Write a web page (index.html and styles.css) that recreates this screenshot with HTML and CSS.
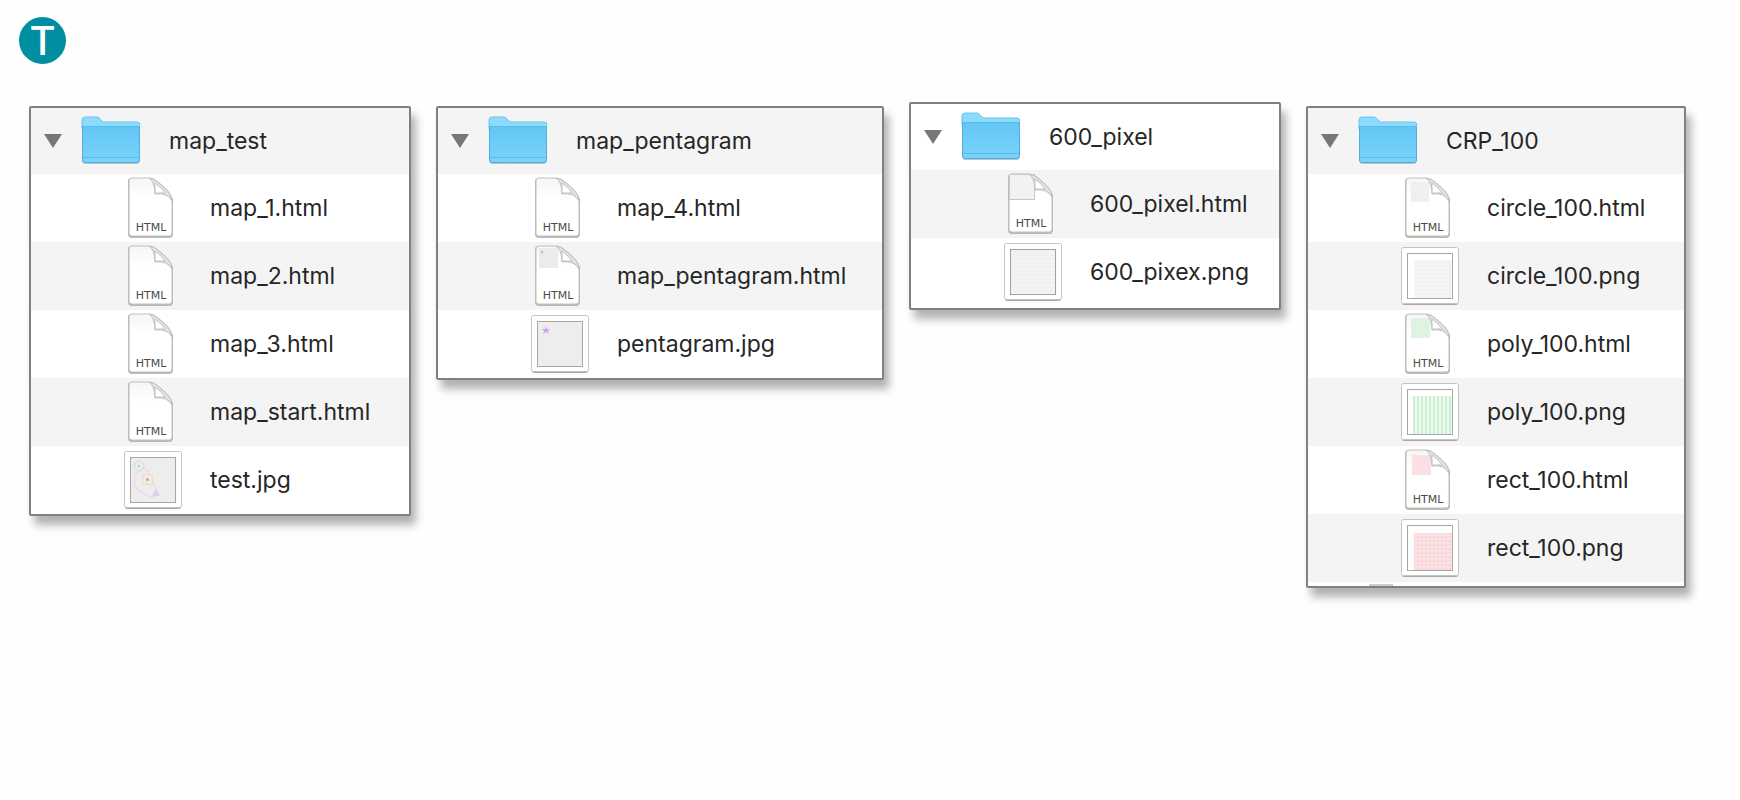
FILE: index.html
```html
<!DOCTYPE html>
<html lang="en">
<head>
    <meta charset="UTF-8">
    <meta name="viewport" content="width=device-width, initial-scale=1.0">
    <title>Map files</title>
    <link rel="stylesheet" href="styles.css">
</head>
<body>
    <!-- shared icons -->
    <svg class="defs" width="0" height="0" aria-hidden="true">
        <defs>
            <linearGradient id="blue" x1="0" y1="0" x2="0" y2="1">
                <stop offset="0" stop-color="#62c6f5"/>
                <stop offset="1" stop-color="#7ad3fb"/>
            </linearGradient>
            <linearGradient id="paper" x1="0" y1="0" x2="0" y2="1">
                <stop offset="0" stop-color="#f6f6f6"/>
                <stop offset="0.35" stop-color="#ffffff"/>
            </linearGradient>
            <pattern id="grid-gray" width="4" height="4" patternUnits="userSpaceOnUse">
                <rect width="4" height="4" fill="#f6f6f6"/>
                <path d="M0 0H4M0 0V4" stroke="#ececec"/>
            </pattern>
            <pattern id="lines-gray" width="4" height="4" patternUnits="userSpaceOnUse">
                <rect width="4" height="4" fill="#f3f3f3"/>
                <path d="M0 1H4" stroke="#eeeeee"/>
            </pattern>
            <pattern id="grid-green" width="4" height="4" patternUnits="userSpaceOnUse">
                <rect width="4" height="4" fill="#f0fbf1"/>
                <path d="M1 0V4" stroke="#c8ecce" stroke-width="2"/>
                <path d="M0 3H4" stroke="#e0f5e3"/>
            </pattern>
            <pattern id="grid-red" width="4" height="4" patternUnits="userSpaceOnUse">
                <rect width="4" height="4" fill="#fbdfe2"/>
                <path d="M0 3H4" stroke="#f6ccd1"/>
                <path d="M3 0V4" stroke="#fae9eb"/>
            </pattern>
            <symbol id="folder" viewBox="0 0 60 50">
                <rect x="2" y="44" width="56" height="4" rx="2" fill="#b9c3c9"/>
                <path d="M1 10V4Q1 1 4 1H16Q18 1 19 3L21 5Q22 6 24 6H56Q59 6 59 9V14H1Z" fill="#8bdbfd"/>
                <path d="M1 13V4Q1 1 4 1H16Q18 1 19 3L21 5Q22 6 24 6H56Q59 6 59 9" fill="none" stroke="#6fc3e8"/>
                <path d="M1 10H59V44Q59 47 56 47H4Q1 47 1 44Z" fill="url(#blue)"/>
                <path d="M1 10.5H59M1 41.5H59" stroke="#5cbbe8"/>
                <path d="M1.500 10V44Q1.500 46.500 4 46.500H56Q58.500 46.500 58.500 44V10" fill="none" stroke="#50aedb"/>
            </symbol>
            <symbol id="page" viewBox="0 0 46 62">
                <path d="M4 2H23Q31 4 44 22V57Q44 60 41 60H4Q1 60 1 57V4Q1 2 4 2Z" fill="none" stroke="#b8b8b8" stroke-width="2"/>
                <path d="M4 1H20Q26 1 31 6L39 13Q44 18 44 24V56Q44 59 41 59H4Q1 59 1 56V4Q1 1 4 1Z" fill="url(#paper)" stroke="#c0c0c0"/>
            </symbol>
            <symbol id="fold" viewBox="0 0 46 62">
                <path d="M21 1Q27 5 27 17Q39 15 44 24Q44 18 39 13L31 6Q26 1 21 1Z" fill="#e2e2e2" stroke="#bdbdbd"/>
                <path d="M27 6V16H37Q35 12 27 6Z" fill="#ffffff" stroke="#c2c2c2"/>
                <text x="23" y="54" text-anchor="middle" class="ext">HTML</text>
            </symbol>
            <symbol id="frame" viewBox="0 0 58 60">
                <rect x="1" y="2" width="56" height="57" rx="2" fill="#a9a9a9"/>
                <rect x="0.500" y="1.500" width="57" height="56" rx="2" fill="#ffffff" stroke="#c4c4c4"/>
            </symbol>
        </defs>
    </svg>

    <header>
        <a class="logo" href="#">T</a>
    </header>

    <main class="panels">
        <details class="panel" open>
            <summary>
                <svg class="arrow" viewBox="0 0 18 14"><path d="M0 0H18L9 14Z"/></svg>
                <svg class="folder"><use href="#folder"/></svg>
                <span>map_test</span>
            </summary>
            <ul>
                <li><svg class="page"><use href="#page"/><use href="#fold"/></svg><span>map_1.html</span></li>
                <li><svg class="page"><use href="#page"/><use href="#fold"/></svg><span>map_2.html</span></li>
                <li><svg class="page"><use href="#page"/><use href="#fold"/></svg><span>map_3.html</span></li>
                <li><svg class="page"><use href="#page"/><use href="#fold"/></svg><span>map_start.html</span></li>
                <li>
                    <svg class="thumb">
                        <use href="#frame"/>
                        <rect x="6.500" y="7.500" width="45" height="45" fill="#ededed" stroke="#a8a8a8"/>
                        <path d="M13 22Q6 35 18 43Q27 49 34 45L30 34L24 21L18 18" fill="none" stroke="#f1d6f3" stroke-width="1.500"/>
                        <circle cx="15" cy="16" r="5" fill="none" stroke="#cbdcd9"/>
                        <circle cx="15" cy="16" r="1" fill="#b9b9b9"/>
                        <rect x="18.500" y="24.500" width="10" height="10" fill="#f1ebe4" stroke="#f3d9c2"/>
                        <circle cx="23.500" cy="29.500" r="1.500" fill="#b8aaa8"/>
                        <path d="M28 45L32 39L36 46Z" fill="#dfcdef"/>
                    </svg>
                    <span>test.jpg</span>
                </li>
            </ul>
        </details>

        <details class="panel" open>
            <summary>
                <svg class="arrow" viewBox="0 0 18 14"><path d="M0 0H18L9 14Z"/></svg>
                <svg class="folder"><use href="#folder"/></svg>
                <span>map_pentagram</span>
            </summary>
            <ul>
                <li><svg class="page"><use href="#page"/><use href="#fold"/></svg><span>map_4.html</span></li>
                <li>
                    <svg class="page">
                        <use href="#page"/>
                        <rect x="4" y="3" width="19" height="20" fill="#ebebeb"/>
                        <circle cx="7" cy="7" r="1.500" fill="#dcb6ea"/>
                        <use href="#fold"/>
                    </svg>
                    <span>map_pentagram.html</span>
                </li>
                <li>
                    <svg class="thumb">
                        <use href="#frame"/>
                        <rect x="6.500" y="7.500" width="45" height="45" fill="#ededed" stroke="#a8a8a8"/>
                        <path d="M15 12L16 15H19L17 17L18 20L15 18L12 20L13 17L11 15H14Z" fill="#d6a3ec"/>
                    </svg>
                    <span>pentagram.jpg</span>
                </li>
            </ul>
        </details>

        <details class="panel white-first" open>
            <summary>
                <svg class="arrow" viewBox="0 0 18 14"><path d="M0 0H18L9 14Z"/></svg>
                <svg class="folder"><use href="#folder"/></svg>
                <span>600_pixel</span>
            </summary>
            <ul>
                <li>
                    <svg class="page">
                        <use href="#page"/>
                        <rect x="1.500" y="1.500" width="25" height="25" fill="#f2f2f2" stroke="#c8c8c8"/>
                        <use href="#fold"/>
                    </svg>
                    <span>600_pixel.html</span>
                </li>
                <li>
                    <svg class="thumb">
                        <use href="#frame"/>
                        <rect x="6.500" y="7.500" width="45" height="45" fill="url(#lines-gray)" stroke="#a0a0a0"/>
                    </svg>
                    <span>600_pixex.png</span>
                </li>
            </ul>
        </details>

        <details class="panel" open>
            <summary>
                <svg class="arrow" viewBox="0 0 18 14"><path d="M0 0H18L9 14Z"/></svg>
                <svg class="folder"><use href="#folder"/></svg>
                <span>CRP_100</span>
            </summary>
            <ul>
                <li>
                    <svg class="page">
                        <use href="#page"/>
                        <rect x="6" y="5" width="18" height="20" fill="#efefef"/>
                        <use href="#fold"/>
                    </svg>
                    <span>circle_100.html</span>
                </li>
                <li>
                    <svg class="thumb">
                        <use href="#frame"/>
                        <rect x="13" y="14" width="38" height="38" fill="url(#grid-gray)"/>
                        <rect x="6.500" y="7.500" width="45" height="45" fill="none" stroke="#a8a8a8"/>
                    </svg>
                    <span>circle_100.png</span>
                </li>
                <li>
                    <svg class="page">
                        <use href="#page"/>
                        <rect x="6" y="5" width="19" height="20" fill="#dff3e1"/>
                        <use href="#fold"/>
                    </svg>
                    <span>poly_100.html</span>
                </li>
                <li>
                    <svg class="thumb">
                        <use href="#frame"/>
                        <rect x="12" y="14" width="39" height="38" fill="url(#grid-green)"/>
                        <rect x="6.500" y="7.500" width="45" height="45" fill="none" stroke="#a8a8a8"/>
                    </svg>
                    <span>poly_100.png</span>
                </li>
                <li>
                    <svg class="page">
                        <use href="#page"/>
                        <rect x="7" y="6" width="19" height="20" fill="#fae0e3"/>
                        <use href="#fold"/>
                    </svg>
                    <span>rect_100.html</span>
                </li>
                <li>
                    <svg class="thumb">
                        <use href="#frame"/>
                        <rect x="13" y="15" width="38" height="37" fill="url(#grid-red)"/>
                        <rect x="6.500" y="7.500" width="45" height="45" fill="none" stroke="#a8a8a8"/>
                    </svg>
                    <span>rect_100.png</span>
                </li>
            </ul>
            <!-- top edge of the next folder -->
            <div class="next"></div>
        </details>
    </main>
</body>
</html>
```

FILE: styles.css
```css
* {
    box-sizing: border-box;
}
body {
    margin: 0;
    background: #fefefe;
    color: #262626;
    font-family: Inter, Roboto, Arial, sans-serif;
    font-size: 23px;
    line-height: 32px;
}
header {
    padding: 17px 19px 0;
}
.logo {
    display: flex;
    align-items: center;
    justify-content: center;
    width: 47px;
    height: 47px;
    border-radius: 50%;
    background: #008fa1;
    color: #fff;
    font-size: 40px;
    font-weight: 500;
    text-decoration: none;
}
.panels {
    display: grid;
    grid-template-columns: 382fr 448fr 372fr 380fr;
    gap: 25px;
    align-items: start;
    padding: 42px 54px 30px 29px;
}
.panel {
    border: 2px solid #808080;
    border-radius: 2px;
    background: #fff;
    box-shadow: 5px 9px 9px rgba(0, 0, 0, 0.3);
}
.white-first {
    margin-top: -4px;
    padding-bottom: 2px;
}
summary {
    display: flex;
    align-items: center;
    height: 66px;
    padding-left: 13px;
    background: #f4f4f4;
    list-style: none;
    cursor: pointer;
}
ul {
    margin: 0;
    padding: 0;
    list-style: none;
}
li {
    display: flex;
    align-items: center;
    height: 68px;
    padding-left: 93px;
}
li:nth-child(even) {
    background: #f4f4f4;
}
.white-first summary,
.white-first li:nth-child(even) {
    background: #fff;
}
.white-first li:nth-child(odd) {
    background: #f4f4f4;
}
svg {
    flex: none;
}
.defs {
    display: block;
}
.arrow {
    width: 18px;
    height: 14px;
    margin-right: 19px;
    fill: #777;
}
.folder {
    width: 60px;
    height: 50px;
    margin-right: 28px;
}
.page {
    width: 46px;
    height: 62px;
    margin: 0 36px 0 4px;
}
.thumb {
    width: 58px;
    height: 60px;
    margin-right: 28px;
}
.ext {
    fill: #4a4a4a;
    font-family: "DejaVu Sans", Arial, sans-serif;
    font-size: 11px;
}
.next {
    height: 4px;
    padding: 2px 0 0 61px;
}
.next::before {
    content: "";
    display: block;
    width: 24px;
    height: 2px;
    background: #ccc;
}
```
